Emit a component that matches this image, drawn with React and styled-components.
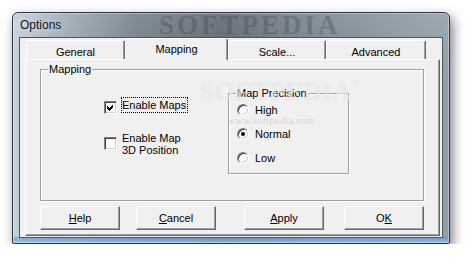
import React from 'react'
import styled, { createGlobalStyle } from 'styled-components'

const GlobalStyle = createGlobalStyle`
    html, body {
        margin: 0;
        background: #ffffff;
    }
    body {
        font-family: "Liberation Sans", Arial, sans-serif;
        font-size: 11px;
        color: #000;
    }
`

const tabs = [
    { label: 'General', width: 99 },
    { label: 'Mapping', width: 103, active: true },
    { label: 'Scale...', width: 98 },
    { label: 'Advanced', width: 100 },
]

const precisions = [
    { label: 'High' },
    { label: 'Normal', checked: true },
    { label: 'Low' },
]

const CheckMark = () => (
    <svg width="11" height="11" viewBox="0 0 11 11" shapeRendering="crispEdges">
        <polygon points="2,4 4,6 8,2 8,5 4,9 2,7" fill="#000" />
    </svg>
)

export default function App() {
    return (
        <>
            <GlobalStyle />
            <Window>
                <TitleBar>
                    <Title>Options</Title>
                    <TitleMark>SOFTPEDIA</TitleMark>
                </TitleBar>
                <Client>
                    <TabStrip>
                        {tabs.map(t => (
                            <Tab key={t.label} $w={t.width} $active={t.active}>
                                {t.label}
                            </Tab>
                        ))}
                    </TabStrip>
                    <Panel>
                        <GroupBox $w={384} $h={138}>
                            <Legend>Mapping</Legend>
                            <GroupBody>
                                <CheckColumn>
                                    <CheckRow>
                                        <CheckBox $top={4}><CheckMark /></CheckBox>
                                        <FocusLabel>Enable Maps</FocusLabel>
                                    </CheckRow>
                                    <CheckRow $gap={18}>
                                        <CheckBox $top={5} />
                                        <CheckLabel>Enable Map<br />3D Position</CheckLabel>
                                    </CheckRow>
                                </CheckColumn>
                                <GroupBox $w={121} $h={87} $top={12}>
                                    <Legend>Map Precision</Legend>
                                    <RadioList>
                                        {precisions.map(p => (
                                            <RadioRow key={p.label}>
                                                <Radio $checked={p.checked} />
                                                <RadioLabel>{p.label}</RadioLabel>
                                            </RadioRow>
                                        ))}
                                    </RadioList>
                                </GroupBox>
                            </GroupBody>
                        </GroupBox>
                        <ButtonRow>
                            <Button><u>H</u>elp</Button>
                            <Button $gap={16}><u>C</u>ancel</Button>
                            <Button $gap={28}><u>A</u>pply</Button>
                            <Button $gap={20}>O<u>K</u></Button>
                        </ButtonRow>
                        <Watermark>
                            <WatermarkBig>SOFTPEDIA<sup>™</sup></WatermarkBig>
                            <WatermarkUrl>www.softpedia.com</WatermarkUrl>
                        </Watermark>
                    </Panel>
                </Client>
            </Window>
        </>
    )
}

const Window = styled.div`
    box-sizing: border-box;
    margin: 12px 0 0 12px;
    width: 438px;
    height: 232px;
    padding: 0 6px 5px 6px;
    border: 1px solid #2f363d;
    border-radius: 6px 6px 2px 2px;
    background:
        linear-gradient(0deg, rgba(150, 190, 230, 0.9) 0px, rgba(110, 160, 215, 0.75) 5px, rgba(110, 160, 215, 0) 7px),
        linear-gradient(90deg, rgba(190, 215, 235, 0.6) 0px, rgba(190, 215, 235, 0) 7px),
        linear-gradient(180deg, rgba(255,255,255,0.12) 0%, rgba(255,255,255,0) 30%),
        linear-gradient(90deg, #c6cfd8 0%, #a3afba 10%, #737e89 28%, #5c666f 48%, #76818c 68%, #87929c 85%, #929da7 100%);
    box-shadow: 3px 5px 12px rgba(0, 0, 0, 0.5), inset 0 0 0 1px rgba(255,255,255,0.35);
    display: flex;
    flex-direction: column;
`

const TitleBar = styled.div`
    position: relative;
    height: 24px;
`

const Title = styled.div`
    position: relative;
    z-index: 1;
    padding-left: 1px;
    line-height: 24px;
    font-size: 12px;
    color: #0c1420;
    text-shadow: 0 0 6px rgba(255,255,255,0.7);
`

const TitleMark = styled.div`
    position: absolute;
    left: 140px;
    top: 1px;
    line-height: 23px;
    font-family: "Liberation Serif", serif;
    font-weight: bold;
    font-size: 27px;
    letter-spacing: 3px;
    color: rgba(50, 58, 66, 0.3);
`

const Client = styled.div`
    box-sizing: border-box;
    width: 424px;
    height: 201px;
    border: 1px solid #4b5661;
    background: #f0f0f0;
    display: flex;
    flex-direction: column;
`

const TabStrip = styled.div`
    display: flex;
    align-items: flex-end;
    height: 21px;
    padding-left: 6px;
`

const Tab = styled.div`
    position: relative;
    z-index: ${p => p.$active ? 2 : 0};
    box-sizing: border-box;
    width: ${p => p.$w}px;
    height: ${p => p.$active ? 22 : 19}px;
    margin-bottom: ${p => p.$active ? -1 : 0}px;
    padding-top: ${p => p.$active ? 4 : 5}px;
    line-height: 12px;
    text-align: center;
    background: #f0f0f0;
    border-style: solid;
    border-width: 1px 1px 0 1px;
    border-color: #ffffff #696969 transparent #ffffff;
    border-radius: 2px 2px 0 0;
    box-shadow: inset -1px 0 0 #a0a0a0;
`

const Panel = styled.div`
    position: relative;
    z-index: 1;
    box-sizing: border-box;
    width: 415px;
    height: 177px;
    margin-left: 5px;
    padding: 3px 0 0 14px;
    border: 1px solid;
    border-color: #ffffff #696969 #696969 #ffffff;
    box-shadow: inset -1px -1px 0 #a0a0a0;
    background: #f0f0f0;
`

const GroupBox = styled.fieldset`
    box-sizing: border-box;
    flex: none;
    width: ${p => p.$w}px;
    height: ${p => p.$h}px;
    margin: ${p => p.$top || 0}px 0 0 0;
    padding: 0;
    min-width: 0;
    border: 1px solid #a0a0a0;
    box-shadow: 1px 1px 0 #ffffff, inset 1px 1px 0 #ffffff;
`

const Legend = styled.legend`
    margin-left: 7px;
    padding: 0 1px;
    line-height: 12px;
    font-size: 11px;
    background: #f0f0f0;
`

const GroupBody = styled.div`
    display: flex;
`

const CheckColumn = styled.div`
    box-sizing: border-box;
    width: 124px;
    margin-left: 63px;
    padding-top: 22px;
`

const CheckRow = styled.div`
    display: flex;
    align-items: flex-start;
    margin-top: ${p => p.$gap || 0}px;
`

const CheckBox = styled.span`
    box-sizing: border-box;
    flex: none;
    width: 13px;
    height: 13px;
    margin-top: ${p => p.$top}px;
    border: 1px solid;
    border-color: #808080 #ffffff #ffffff #808080;
    box-shadow: inset 1px 1px 0 #404040, inset -1px -1px 0 #d4d0c8;
    background: #ffffff;
    display: flex;
    svg { display: block; }
`

const FocusLabel = styled.span`
    margin-left: 4px;
    padding-right: 1px;
    line-height: 14px;
    border: 1px dotted #000;
`

const CheckLabel = styled.span`
    margin-left: 5px;
    line-height: 12px;
`

const RadioList = styled.div`
    display: flex;
    flex-direction: column;
    gap: 12px;
    padding: 5px 0 0 8px;
`

const RadioRow = styled.div`
    display: flex;
    align-items: center;
    height: 12px;
`

const Radio = styled.span`
    position: relative;
    box-sizing: border-box;
    flex: none;
    width: 12px;
    height: 12px;
    border-radius: 50%;
    border: 1px solid;
    border-color: #808080 #ffffff #ffffff #808080;
    box-shadow: inset 1px 1px 0 #404040, inset -1px -1px 0 #d4d0c8;
    background: #ffffff;

    &::after {
        content: '';
        display: ${p => p.$checked ? 'block' : 'none'};
        position: absolute;
        left: 3px;
        top: 3px;
        width: 4px;
        height: 4px;
        border-radius: 50%;
        background: #000;
    }
`

const RadioLabel = styled.span`
    margin-left: 6px;
    line-height: 12px;
`

const ButtonRow = styled.div`
    display: flex;
    margin-top: 5px;
`

const Button = styled.button`
    box-sizing: border-box;
    width: 80px;
    height: 24px;
    margin: 0 0 0 ${p => p.$gap || 0}px;
    padding: 0 0 1px 0;
    font-family: "Liberation Sans", Arial, sans-serif;
    font-size: 11px;
    color: #000;
    background: #f0f0f0;
    border: 1px solid;
    border-color: #ffffff #696969 #696969 #ffffff;
    box-shadow: inset -1px -1px 0 #a0a0a0;
    border-radius: 0;
`

const Watermark = styled.div`
    position: absolute;
    left: 174px;
    top: 18px;
    pointer-events: none;
    font-family: "Liberation Serif", serif;
`

const WatermarkBig = styled.div`
    font-size: 25px;
    font-weight: bold;
    letter-spacing: 1px;
    color: rgba(255, 255, 255, 0.5);
    text-shadow: 0 0 1px rgba(150, 150, 150, 0.3);

    sup {
        font-size: 8px;
        font-weight: normal;
        vertical-align: 14px;
    }
`

const WatermarkUrl = styled.div`
    margin: 8px 0 0 27px;
    font-size: 11px;
    color: rgba(170, 170, 170, 0.4);
`
